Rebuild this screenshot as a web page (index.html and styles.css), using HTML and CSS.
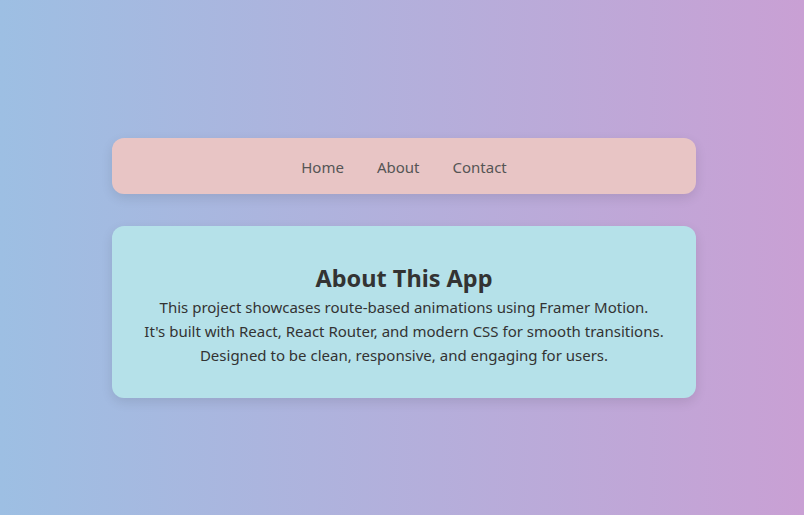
FILE: index.html
```html
<!DOCTYPE html>
<html lang="en">
<head>
<meta charset="utf-8">
<title>About</title>
<link rel="stylesheet" href="styles.css">
</head>
<body>
<div class="wrap">
  <nav class="nav">
    <a href="#">Home</a>
    <a href="#">About</a>
    <a href="#">Contact</a>
  </nav>
  <section class="card">
    <h2>About This App</h2>
    <p>This project showcases route-based animations using Framer Motion.</p>
    <p>It's built with React, React Router, and modern CSS for smooth transitions.</p>
    <p>Designed to be clean, responsive, and engaging for users.</p>
  </section>
</div>
</body>
</html>
```

FILE: styles.css
```css
html, body {
  margin: 0;
  height: 100%;
}
body {
  background: linear-gradient(to right, #9dbfe3, #c9a0d4);
  font-family: "Noto Sans", "Open Sans", sans-serif;
  color: #333;
  display: flex;
  justify-content: center;
  padding-left: 4px;
  box-sizing: border-box;
}
.wrap {
  width: 584px;
  margin-top: 138px;
  display: flex;
  flex-direction: column;
  gap: 32px;
}
.nav {
  height: 56px;
  box-sizing: border-box;
  padding-top: 2px;
  background: #e8c5c5;
  border-radius: 12px;
  display: flex;
  justify-content: center;
  align-items: center;
  gap: 33px;
  box-shadow: 0 4px 12px rgba(0, 0, 0, 0.1);
}
.nav a {
  color: #555;
  text-decoration: none;
  font-size: 15px;
}
.card {
  background: #b5e1e9;
  border-radius: 12px;
  padding: 32px 10px 31px;
  text-align: center;
  box-shadow: 0 4px 12px rgba(0, 0, 0, 0.1);
}
.card h2 {
  margin: 5px 0 2px;
  font-size: 23.5px;
  line-height: 30px;
  font-weight: 700;
  color: #333;
}
.card p {
  margin: 0;
  font-size: 15px;
  line-height: 24px;
  white-space: nowrap;
}
```
